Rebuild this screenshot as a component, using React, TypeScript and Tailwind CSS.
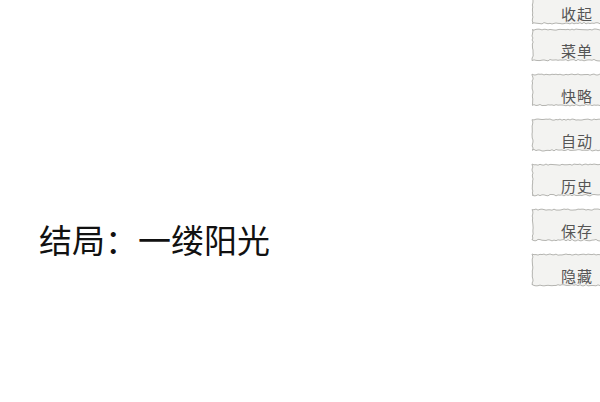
import React from "react"

const labels = ["菜单", "快略", "自动", "历史", "保存", "隐藏"]

// jagged edge for the paper-like buttons
const edgePath = (w: number, h: number, seed: number) => {
  let s = seed
  const rnd = () => {
    s = (s * 9301 + 49297) % 233280
    return s / 233280
  }
  const pts: string[] = []
  for (let x = 1; x <= w - 1; x += 2) pts.push(`${x},${1 + rnd() * 1.2}`)
  for (let y = 2; y <= h - 2; y += 2) pts.push(`${w - 1 - rnd() * 1.2},${y}`)
  for (let x = w - 1; x >= 1; x -= 2) pts.push(`${x},${h - 1 - rnd() * 1.6}`)
  for (let y = h - 2; y >= 2; y -= 2) pts.push(`${1 + rnd() * 1.2},${y}`)
  return "M" + pts.join(" L") + " Z"
}

const PaperButton = ({ label, seed }: { label: string; seed: number }) => (
  <div className="relative h-[34px] w-[92px]">
    <svg className="absolute inset-0" width="92" height="34" viewBox="0 0 92 34">
      <path d={edgePath(92, 34, seed)} fill="#f3f3f1" stroke="#b4b4b0" strokeWidth="1" />
    </svg>
    <div className="relative flex h-full items-end justify-center pb-[1px] text-[15px] leading-[20px] text-[#555555] tracking-[1px]">
      {label}
    </div>
  </div>
)

export default function App() {
  return (
    <div
      className="relative h-[402px] w-[600px] overflow-hidden bg-white"
      style={{ fontFamily: '"Noto Sans CJK SC", "Noto Sans", sans-serif' }}
    >
      <div className="pl-[39px] pt-[216px] text-[33px] leading-[46px] text-[#111111]">
        结局：一缕阳光
      </div>
      <div className="absolute right-[-23px] top-[-9px] flex flex-col">
        <PaperButton label="收起" seed={5} />
        <div className="mt-[3px] flex flex-col gap-[11px]">
          {labels.map((l, i) => (
            <PaperButton key={l} label={l} seed={i * 37 + 11} />
          ))}
        </div>
      </div>
    </div>
  )
}
